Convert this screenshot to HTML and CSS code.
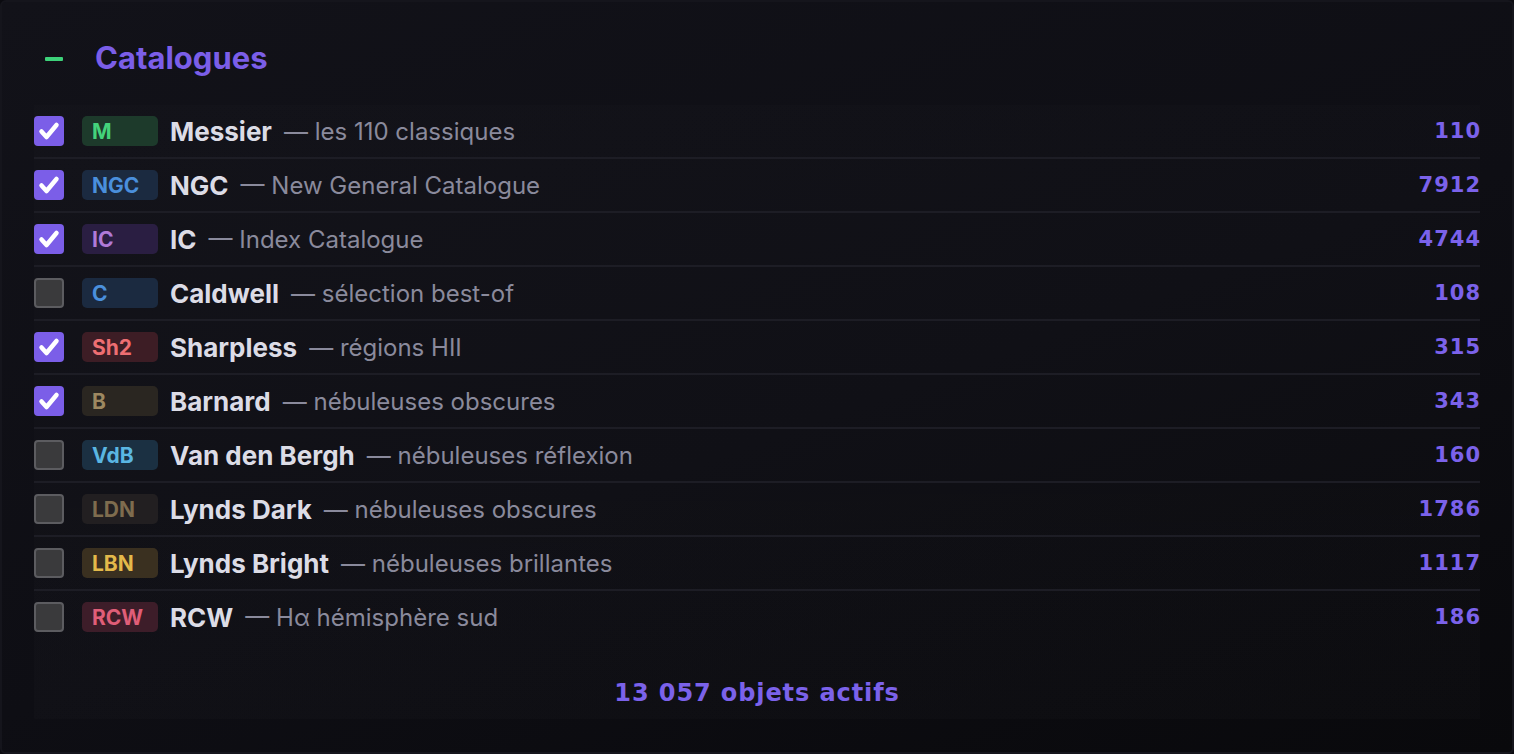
FILE: index.html
```html
<!DOCTYPE html>
<html lang="fr">
<head>
<meta charset="utf-8">
<title>Catalogues</title>
<link rel="stylesheet" href="styles.css">
</head>
<body>
<section class="panel">
  <header class="head">
    <span class="dash"></span>
    <h2 class="title">Catalogues</h2>
  </header>
  <div class="list">
    <div class="row">
      <span class="cb on"><svg viewBox="0 0 30 30"><path d="M7.5 15.5l5 5.5 10-12" /></svg></span>
      <span class="badge b-m">M</span>
      <span class="name">Messier</span><span class="desc">— les 110 classiques</span>
      <span class="count">110</span>
    </div>
    <div class="row">
      <span class="cb on"><svg viewBox="0 0 30 30"><path d="M7.5 15.5l5 5.5 10-12" /></svg></span>
      <span class="badge b-ngc">NGC</span>
      <span class="name">NGC</span><span class="desc">— New General Catalogue</span>
      <span class="count">7912</span>
    </div>
    <div class="row">
      <span class="cb on"><svg viewBox="0 0 30 30"><path d="M7.5 15.5l5 5.5 10-12" /></svg></span>
      <span class="badge b-ic">IC</span>
      <span class="name">IC</span><span class="desc">— Index Catalogue</span>
      <span class="count">4744</span>
    </div>
    <div class="row">
      <span class="cb"></span>
      <span class="badge b-c">C</span>
      <span class="name">Caldwell</span><span class="desc">— sélection best-of</span>
      <span class="count">108</span>
    </div>
    <div class="row">
      <span class="cb on"><svg viewBox="0 0 30 30"><path d="M7.5 15.5l5 5.5 10-12" /></svg></span>
      <span class="badge b-sh">Sh2</span>
      <span class="name">Sharpless</span><span class="desc">— régions HII</span>
      <span class="count">315</span>
    </div>
    <div class="row">
      <span class="cb on"><svg viewBox="0 0 30 30"><path d="M7.5 15.5l5 5.5 10-12" /></svg></span>
      <span class="badge b-b">B</span>
      <span class="name">Barnard</span><span class="desc">— nébuleuses obscures</span>
      <span class="count">343</span>
    </div>
    <div class="row">
      <span class="cb"></span>
      <span class="badge b-vdb">VdB</span>
      <span class="name">Van den Bergh</span><span class="desc">— nébuleuses réflexion</span>
      <span class="count">160</span>
    </div>
    <div class="row">
      <span class="cb"></span>
      <span class="badge b-ldn">LDN</span>
      <span class="name">Lynds Dark</span><span class="desc">— nébuleuses obscures</span>
      <span class="count">1786</span>
    </div>
    <div class="row">
      <span class="cb"></span>
      <span class="badge b-lbn">LBN</span>
      <span class="name">Lynds Bright</span><span class="desc">— nébuleuses brillantes</span>
      <span class="count">1117</span>
    </div>
    <div class="row last">
      <span class="cb"></span>
      <span class="badge b-rcw">RCW</span>
      <span class="name">RCW</span><span class="desc">— Hα hémisphère sud</span>
      <span class="count">186</span>
    </div>
    <div class="footer">13 057 objets actifs</div>
  </div>
</section>
</body>
</html>
```

FILE: styles.css
```css
html, body {
  margin: 0;
  padding: 0;
  background: #0b0b10;
}
body {
  font-family: Inter, "Noto Sans", "Liberation Sans", sans-serif;
  width: 1514px;
  height: 754px;
  overflow: hidden;
}
.panel {
  box-sizing: border-box;
  width: 1514px;
  height: 754px;
  border: 2px solid #15151c;
  border-radius: 6px;
  background: linear-gradient(160deg, #121219 0%, #0e0e14 55%, #09090c 100%);
  padding: 0 32px 0 32px;
}
.head {
  display: flex;
  align-items: center;
  height: 108px;
  padding-left: 11px;
  padding-top: 2px;
  box-sizing: border-box;
}
.dash {
  width: 18px;
  height: 4px;
  background: #3dd27a;
  border-radius: 1px;
  margin-right: 32px;
  margin-top: 4px;
}
.title {
  margin: 0;
  font-size: 31px;
  font-weight: 700;
  color: #7b5ee8;
  letter-spacing: 0;
}
.list {
  background: linear-gradient(180deg, rgba(255,255,255,0.006), rgba(255,255,255,0.012));
  width: 1446px;
  height: 614px;
  margin-top: -5px;
}
.row {
  display: flex;
  align-items: center;
  height: 52px;
  border-bottom: 2px solid #1d1d25;
}
.row.last {
  border-bottom: none;
}
.cb {
  box-sizing: border-box;
  width: 30px;
  height: 30px;
  border-radius: 4px;
  background: #3a3a3c;
  border: 2px solid #5c5c60;
  flex: none;
  display: flex;
}
.cb.on {
  background: #7b5ee8;
  border: none;
}
.cb svg {
  width: 30px;
  height: 30px;
}
.cb path {
  fill: none;
  stroke: #ffffff;
  stroke-width: 4.5;
  stroke-linecap: round;
  stroke-linejoin: round;
}
.badge {
  box-sizing: border-box;
  width: 76px;
  height: 30px;
  margin-left: 18px;
  margin-right: 12px;
  border-radius: 5px;
  padding-left: 10px;
  display: flex;
  align-items: center;
  font-size: 21px;
  font-weight: 700;
  flex: none;
}
.b-m { background: #1d3a2b; color: #44d37b; }
.b-ngc { background: #1b2a40; color: #4a8fdc; }
.b-ic { background: #2a1e42; color: #b07ad8; }
.b-c { background: #1b2a40; color: #4a8fdc; }
.b-sh { background: #3d1d25; color: #ee6e72; }
.b-b { background: #2a2621; color: #9d8860; }
.b-vdb { background: #1b3042; color: #5ab6e2; }
.b-ldn { background: #221f21; color: #7e6c4e; }
.b-lbn { background: #3a3020; color: #e3b94a; }
.b-rcw { background: #3d1d29; color: #e05e78; }
.name {
  font-size: 26px;
  font-weight: 700;
  color: #dcdce6;
  margin-right: 12px;
}
.desc {
  font-size: 24px;
  color: #8a8a9c;
}
.count {
  margin-left: auto;
  font-family: "DejaVu Sans", sans-serif;
  font-weight: 700;
  font-size: 21px;
  color: #7b62ea;
  letter-spacing: 1px;
  margin-right: -1px;
}
.footer {
  text-align: center;
  padding-top: 36px;
  font-family: "DejaVu Sans", sans-serif;
  font-weight: 700;
  font-size: 24px;
  letter-spacing: 0.9px;
  color: #7b62ea;
}
```
